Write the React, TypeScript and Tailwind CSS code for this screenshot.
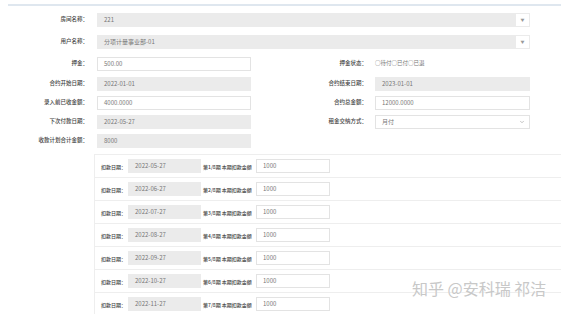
import { ChevronDown } from 'lucide-react'

const plans = [
  { date: '2022-05-27', n: 1 },
  { date: '2022-06-27', n: 2 },
  { date: '2022-07-27', n: 3 },
  { date: '2022-08-27', n: 4 },
  { date: '2022-09-27', n: 5 },
  { date: '2022-10-27', n: 6 },
  { date: '2022-11-27', n: 7 },
]

function Label({ text, w }: { text: string; w: string }) {
  return <div className={`${w} shrink-0 text-right text-[#444] font-medium whitespace-nowrap`}>{text}</div>
}

function Box({ value, gray, w }: { value: string; gray?: boolean; w: string }) {
  return (
    <div
      className={`${w} h-[14px] shrink-0 flex items-center pl-[6px] border whitespace-nowrap text-[6px] ${
        gray ? 'bg-[#ebebeb] border-[#ebebeb]' : 'bg-white border-[#e3e3e3]'
      } text-[#777]`}
    >
      {value}
    </div>
  )
}

export default function App() {
  return (
    <div
      className="relative w-[569px] h-[314px] bg-white overflow-hidden text-[5.5px] leading-none"
      style={{ fontFamily: '"Noto Sans CJK SC", "Noto Sans", sans-serif' }}
    >
      <div className="ml-[8px] mt-[4px] w-[553px] h-[2px] bg-[#dfe7ef]" />

      {/* 房间名称 */}
      <div className="flex items-center mt-[7px]">
        <Label text="房间名称：" w="w-[88px]" />
        <div className="ml-[9px] w-[433px] h-[14px] flex border border-[#ebebeb]">
          <div className="flex-1 bg-[#ebebeb] flex items-center pl-[6px] text-[#777] text-[6px]">221</div>
          <div className="w-[13px] flex items-center justify-center text-[#999] text-[4px]">▼</div>
        </div>
      </div>

      {/* 用户名称 */}
      <div className="flex items-center mt-[8px]">
        <Label text="用户名称：" w="w-[88px]" />
        <div className="ml-[9px] w-[433px] h-[14px] flex border border-[#ebebeb]">
          <div className="flex-1 bg-[#ebebeb] flex items-center pl-[6px] text-[#777] text-[6px]">分项计量事业部-01</div>
          <div className="w-[13px] flex items-center justify-center text-[#999] text-[4px]">▼</div>
        </div>
      </div>

      {/* 押金 / 押金状态 */}
      <div className="flex items-center mt-[8px]">
        <Label text="押金：" w="w-[88px]" />
        <div className="ml-[9px]">
          <Box value="500.00" w="w-[154px]" />
        </div>
        <Label text="押金状态：" w="w-[116px]" />
        <div className="ml-[8px] flex items-center text-[#777] whitespace-nowrap">
          <span>○待付</span>
          <span>○已付</span>
          <span>○已退</span>
        </div>
      </div>

      {/* 合约开始日期 / 合约结束日期 */}
      <div className="flex items-center mt-[6px]">
        <Label text="合约开始日期：" w="w-[88px]" />
        <div className="ml-[9px]">
          <Box value="2022-01-01" gray w="w-[154px]" />
        </div>
        <Label text="合约结束日期：" w="w-[116px]" />
        <div className="ml-[8px]">
          <Box value="2023-01-01" gray w="w-[155px]" />
        </div>
      </div>

      {/* 录入前已收金额 / 合约总金额 */}
      <div className="flex items-center mt-[5px]">
        <Label text="录入前已收金额：" w="w-[88px]" />
        <div className="ml-[9px]">
          <Box value="4000.0000" w="w-[154px]" />
        </div>
        <Label text="合约总金额：" w="w-[116px]" />
        <div className="ml-[8px]">
          <Box value="12000.0000" w="w-[155px]" />
        </div>
      </div>

      {/* 下次付款日期 / 租金交纳方式 */}
      <div className="flex items-center mt-[5px]">
        <Label text="下次付款日期：" w="w-[88px]" />
        <div className="ml-[9px]">
          <Box value="2022-05-27" gray w="w-[154px]" />
        </div>
        <Label text="租金交纳方式：" w="w-[116px]" />
        <div className="ml-[8px] w-[155px] h-[14px] flex items-center justify-between pl-[6px] pr-[4px] border border-[#e3e3e3] text-[#777] text-[6px]">
          <span>月付</span>
          <ChevronDown className="w-[6px] h-[6px] text-[#888]" strokeWidth={2} />
        </div>
      </div>

      {/* 收款计划合计金额 */}
      <div className="flex items-center mt-[5px]">
        <Label text="收款计划合计金额：" w="w-[88px]" />
        <div className="ml-[9px]">
          <Box value="8000" gray w="w-[154px]" />
        </div>
      </div>

      {/* 收款计划 */}
      <div className="ml-[94px] mt-[6px] w-[467px] border-l border-t border-[#eeeeee]">
        {plans.map((p) => (
          <div key={p.n} className="h-[23px] flex items-center border-b border-[#eeeeee] pl-[6px] text-[5px]">
            <span className="w-[27px] shrink-0 text-[#444] font-medium whitespace-nowrap">扣款日期：</span>
            <Box value={p.date} gray w="w-[73px]" />
            <span className="ml-[2px] w-[53px] shrink-0 text-[#444] font-medium whitespace-nowrap">第{p.n}/8期 本期扣款金额</span>
            <Box value="1000" w="w-[74px]" />
          </div>
        ))}
      </div>

      {/* 水印 */}
      <div
        className="absolute left-[412px] top-[280px] text-[16px] leading-none text-[#c8c8c8] whitespace-nowrap"
        style={{ textShadow: '0 0 1px #fff' }}
      >
        知乎 @安科瑞 祁洁
      </div>
    </div>
  )
}
